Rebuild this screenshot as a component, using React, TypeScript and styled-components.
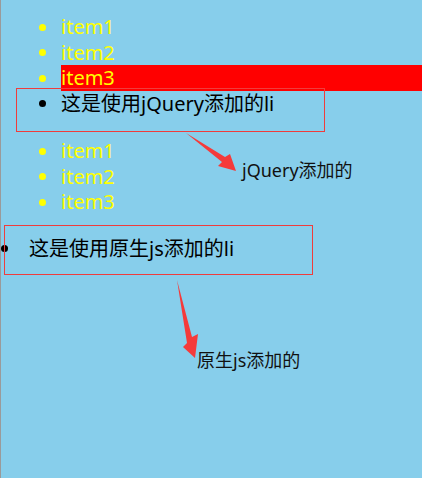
import React from "react";
import styled, { createGlobalStyle } from "styled-components";

const Global = createGlobalStyle`
  html, body { margin: 0; padding: 0; }
  body {
    background: #87ceeb;
    font-family: "Noto Sans", "Noto Sans CJK SC", sans-serif;
  }
`;

const Page = styled.div`
  position: relative;
  width: 422px;
  height: 478px;
  box-sizing: border-box;
  border-left: 1px solid #9a9a9a;
  background: #87ceeb;
  overflow: hidden;
`;

const List = styled.ul<{ $top: number }>`
  list-style: none;
  margin: ${(p) => p.$top}px 0 0 0;
  padding: 0;
  display: flex;
  flex-direction: column;
`;

const Item = styled.li<{ $color: string; $indent: number; $gap: number }>`
  display: flex;
  align-items: center;
  height: 25.5px;
  padding-left: ${(p) => p.$indent}px;
  font-size: 20px;
  line-height: 25.5px;
  color: ${(p) => p.$color};
  white-space: nowrap;
  gap: ${(p) => p.$gap}px;
`;

const Dot = styled.span<{ $color: string }>`
  flex: none;
  width: 7px;
  height: 7px;
  border-radius: 50%;
  background: ${(p) => p.$color};
  margin-top: 1px;
`;

const Text = styled.span<{ $highlight?: boolean }>`
  flex: ${(p) => (p.$highlight ? 1 : "none")};
  background: ${(p) => (p.$highlight ? "#ff0000" : "transparent")};
  height: 25.5px;
`;

const Overlay = styled.svg`
  position: absolute;
  left: -1px;
  top: 0;
  pointer-events: none;
`;

const Note = styled.span<{ $x: number; $y: number }>`
  position: absolute;
  left: ${(p) => p.$x}px;
  top: ${(p) => p.$y}px;
  font-size: 18px;
  line-height: 24px;
  color: #111;
  white-space: nowrap;
`;

const items = ["item1", "item2", "item3"];

export default function App() {
  return (
    <>
      <Global />
      <Page>
        <List $top={14}>
          {items.map((t, i) => (
            <Item key={t} $color="#ffff00" $indent={38} $gap={15}>
              <Dot $color="#ffff00" />
              <Text $highlight={i === 2}>{t}</Text>
            </Item>
          ))}
          <Item $color="#000" $indent={38} $gap={15}>
            <Dot $color="#000" />
            <Text>这是使用jQuery添加的li</Text>
          </Item>
        </List>
        <List $top={22}>
          {items.map((t) => (
            <Item key={t} $color="#ffff00" $indent={38} $gap={15}>
              <Dot $color="#ffff00" />
              <Text>{t}</Text>
            </Item>
          ))}
        </List>
        <List $top={21}>
          <Item $color="#000" $indent={0} $gap={21}>
            <Dot $color="#000" />
            <Text>这是使用原生js添加的li</Text>
          </Item>
        </List>

        <Overlay width="422" height="478" viewBox="0 0 422 478">
          <rect x="16.5" y="88.5" width="308" height="43" fill="none" stroke="#f03c3c" strokeWidth="1" />
          <rect x="4.5" y="225.5" width="308" height="49" fill="none" stroke="#f03c3c" strokeWidth="1" />
          <polygon
            points="186,133 225,157 230,154 236,171 218,166 222,162"
            fill="#f53a3a"
          />
          <polygon
            points="177,280 192,337 198,334 195,358 183,347 187,343"
            fill="#f53a3a"
          />
        </Overlay>
        <Note $x={241} $y={158}>jQuery添加的</Note>
        <Note $x={196} $y={348}>原生js添加的</Note>
      </Page>
    </>
  );
}
